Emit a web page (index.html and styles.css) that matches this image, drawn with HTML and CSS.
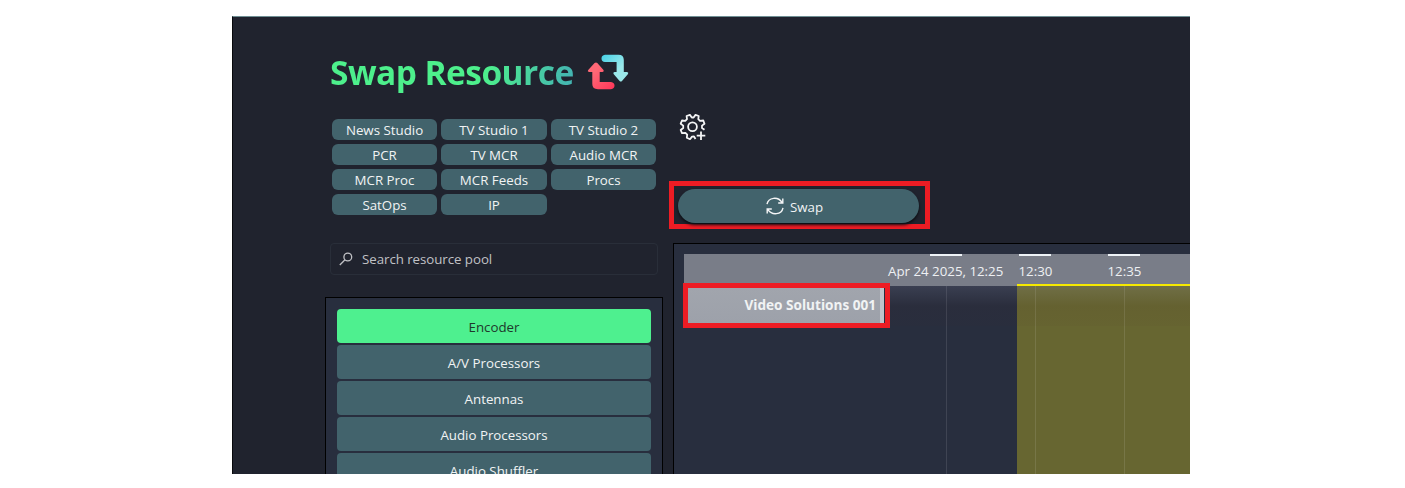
FILE: index.html
```html
<!DOCTYPE html>
<html lang="en">
<head>
<meta charset="utf-8">
<title>Swap Resource</title>
<link rel="stylesheet" href="styles.css">
</head>
<body>
<main class="app">
  <header class="title">
    <h1>Swap Resource</h1>
    <svg class="swap-logo" width="42" height="36" viewBox="0 0 42 36">
      <defs>
        <linearGradient id="blue" x1="0" y1="0" x2="1" y2="1"><stop offset="0" stop-color="#45d0e6"/><stop offset=".6" stop-color="#9be8ea"/></linearGradient>
        <linearGradient id="red" x1="0" y1="0" x2="1" y2="1"><stop offset=".3" stop-color="#ff6876"/><stop offset="1" stop-color="#ff3558"/></linearGradient>
      </defs>
      <path fill="url(#blue)" d="M18 .8H31.500Q36.800 .8 36.800 6V18H40Q42 18.500 41 20L35 27Q33.800 28.200 32.600 27L26.600 20Q25.600 18.500 27.500 18H29.600V8H18Q14.500 7.500 14.500 4.400T18 .8Z"/>
      <path fill="url(#red)" d="M11 35.200Q5.300 35.200 5.300 30V18H2Q0 17.500 1.200 16L7.600 9Q9 7.800 10.300 9L16.500 16Q17.500 17.500 15.500 18H12.700V28H24Q27.500 28.500 27.500 31.600T24 35.200Z"/>
    </svg>
  </header>
  <div class="columns">
    <section class="left">
      <div class="tags">
        <button>News Studio</button><button>TV Studio 1</button><button>TV Studio 2</button>
        <button>PCR</button><button>TV MCR</button><button>Audio MCR</button>
        <button>MCR Proc</button><button>MCR Feeds</button><button>Procs</button>
        <button>SatOps</button><button>IP</button>
      </div>
      <div class="search">
        <svg width="14" height="14" viewBox="0 0 14 14" fill="none" stroke="#c0c1c5" stroke-width="1.300"><circle cx="8.800" cy="5" r="3.900"/><path d="M6 7.800L.8 13"/></svg>
        <span>Search resource pool</span>
      </div>
      <div class="pool">
        <button class="active">Encoder</button>
        <button>A/V Processors</button>
        <button>Antennas</button>
        <button>Audio Processors</button>
        <button>Audio Shuffler</button>
      </div>
    </section>
    <section class="right">
      <svg class="gear" width="28" height="28" viewBox="0 0 28 28" fill="none" stroke="#f4f5f6" stroke-width="1.800" stroke-linejoin="round">
        <path d="M16.500 25L15 22.500L13 22.600L11 25.200L7.800 23.800L8.200 20.600L6.400 18.800L3 19.200L1.700 16L4.200 14V11.600L1.700 9.700L3 6.500L6.300 6.900L8 5.200L7.600 2L10.900 .9L12.800 3.500H14.600L16.500 .9L19.700 2L19.300 5.200L21 6.900L24.300 6.500L25.500 9.700L23 11.600V14L25.500 15.800"/>
        <circle cx="13.500" cy="12.800" r="4.400"/><path d="M22 17.500V26M17.700 21.700H26.300"/>
      </svg>
      <div class="callout swap-callout">
        <button class="swap">
          <svg width="18" height="18" viewBox="0 0 18 18" fill="none" stroke="#f4f5f6" stroke-width="1.400"><path d="M1 7.200C2.400 .2 12-.8 16 5.400M16.800 1.500V6H12.200M17 10.800C15.600 17.800 6 18.800 2 12.600M1.200 16.500V12H5.800"/></svg>
          <span>Swap</span>
        </button>
      </div>
      <div class="timeline">
        <div class="axis">
          <span class="tick t1">Apr 24 2025, 12:25</span>
          <span class="tick t2">12:30</span>
          <span class="tick t3">12:35</span>
        </div>
        <div class="grid">
          <div class="callout row-callout"><div class="resource">Video Solutions 001</div></div>
          <div class="booking"></div>
          <i class="line l1"></i><i class="line l2"></i><i class="line l3"></i>
          <div class="shade"></div>
        </div>
      </div>
    </section>
  </div>
</main>
</body>
</html>
```
FILE: styles.css
```css
* { box-sizing: border-box; }
body { margin: 0; background: #fff; font: 13.300px/20px "Open Sans", "Noto Sans", sans-serif; color: #f1f3f4; }
button { font: inherit; color: inherit; border: 0; padding: 0; background: #42636c; }
.app { width: 958px; height: 458px; margin: 16px 0 0 232px; overflow: hidden; background: #20232e; border-top: 1px solid #6f8f94; border-left: 1px solid #08090c; }
.title { display: flex; gap: 13px; padding: 32px 0 0 97px; height: 101px; }
h1 { margin: 0; width: 244px; font-size: 33.500px; line-height: 46px; font-weight: 700; white-space: nowrap; letter-spacing: -.55px; background: linear-gradient(100deg, #4df08c 62%, #43aeb5 100%); background-clip: text; -webkit-background-clip: text; color: transparent; }
.swap-logo { margin-top: 5px; }
.columns { display: flex; }
.left { width: 338px; margin-left: 92px; flex: none; }
.tags { display: grid; grid-template-columns: 105px 106px 105px; gap: 4px; margin: 1px 0 0 7px; }
.tags button { height: 21px; border-radius: 6px; line-height: 20px; padding-top: 1px; }
.search { display: flex; align-items: center; gap: 9px; width: 328px; height: 32px; margin: 28px 0 0 5px; padding-left: 8px; border: 1px solid #292e39; border-radius: 4px; color: #c0c1c5; letter-spacing: -.05px; }
.pool { display: grid; gap: 2px; width: 338px; height: 190px; margin-top: 22px; padding: 11px; border: 1px solid #000; background: #282e3e; grid-auto-rows: 34px; }
.pool button { border-radius: 4px; padding-top: 2px; }
.pool .active { background: #4ef08f; color: #20382c; }
.right { width: 517px; margin-left: 6px; flex: none; }
.gear { display: block; margin: -4px 0 0 10px; }
.callout { border: 5px solid #ed1c24; }
.swap-callout { width: 261px; height: 48px; margin: 39px 0 0 0; padding: 3px 4px; }
.swap { display: flex; align-items: center; justify-content: center; gap: 6px; width: 241px; height: 34px; padding-right: 8px; border-radius: 17px; box-shadow: 0 2px 3px #0b0d12; }
.swap svg { margin-top: -1px; }
.swap span { padding-top: 2px; }
.timeline { width: 517px; height: 240px; margin: 14px 0 0 4px; padding: 10px 0 0 10px; border: 1px solid #000; border-right: 0; background: #282e3e; }
.axis { display: grid; grid-template-columns: 326px 89px 91px; height: 32px; background: #797d88; color: #eef0f3; }
.tick { position: relative; padding-top: 7px; white-space: nowrap; }
.tick::before { content: ""; position: absolute; top: 0; width: 32px; height: 2px; background: #eef3f7; }
.t1 { padding-left: 204px; }
.t1::before { left: 246px; }
.t2, .t3 { padding-left: 8.500px; }
.t2::before, .t3::before { left: 9px; }
.grid { position: relative; height: 200px; }
.row-callout { position: absolute; z-index: 3; left: -1px; top: -3px; width: 207px; height: 45px; background: #282e3e; }
.resource { width: 196px; height: 35px; padding-right: 4px; border-right: 4px solid #bfc3ca; background: linear-gradient(#a1a5ad, #9da1aa); text-align: right; font-weight: 700; line-height: 33px; font-size: 13.600px; }
.booking { position: absolute; left: 333px; right: 0; top: -2px; bottom: 0; border-top: 2px solid #f5e900; background: #676631; }
.line { position: absolute; top: 0; bottom: 0; width: 1px; background: rgba(255,255,255,.11); }
.l1 { left: 262px; }
.l2 { left: 351px; }
.l3 { left: 440px; }
.shade { position: absolute; inset: 0 0 auto; height: 40px; background: linear-gradient(rgba(160,160,190,.15), rgba(70,35,40,.07) 50%, rgba(70,35,40,.04)); }
```
